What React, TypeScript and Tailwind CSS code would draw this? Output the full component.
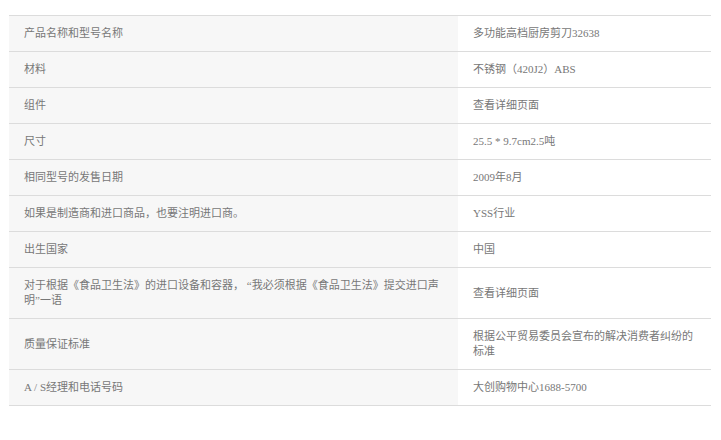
import React from 'react'

const rows: [string, string][] = [
  ['产品名称和型号名称', '多功能高档厨房剪刀32638'],
  ['材料', '不锈钢（420J2）ABS'],
  ['组件', '查看详细页面'],
  ['尺寸', '25.5 * 9.7cm2.5吨'],
  ['相同型号的发售日期', '2009年8月'],
  ['如果是制造商和进口商品，也要注明进口商。', 'YSS行业'],
  ['出生国家', '中国'],
  [
    '对于根据《食品卫生法》的进口设备和容器， “我必须根据《食品卫生法》提交进口声明”一语',
    '查看详细页面',
  ],
  ['质量保证标准', '根据公平贸易委员会宣布的解决消费者纠纷的标准'],
  ['A / S经理和电话号码', '大创购物中心1688-5700'],
]

const App = () => {
  return (
    <div
      className="w-[721px] h-[440px] bg-white pt-[15px] pl-[9px] text-[11px] leading-[15px] text-[#777]"
      style={{ fontFamily: '"Liberation Serif", "Noto Sans CJK SC", serif' }}
    >
      <div className="w-[702px] border-t border-[#dcdcdc]">
        {rows.map(([label, value]) => (
          <div key={label} className="flex border-b border-[#dcdcdc]">
            <div className="w-[449px] shrink-0 bg-[#f7f7f7] py-[10px] pl-[15px] pr-[10px] flex items-center">
              {label}
            </div>
            <div className="flex-1 py-[10px] pl-[15px] pr-[12px] flex items-center">
              {value}
            </div>
          </div>
        ))}
      </div>
    </div>
  )
}

export default App
